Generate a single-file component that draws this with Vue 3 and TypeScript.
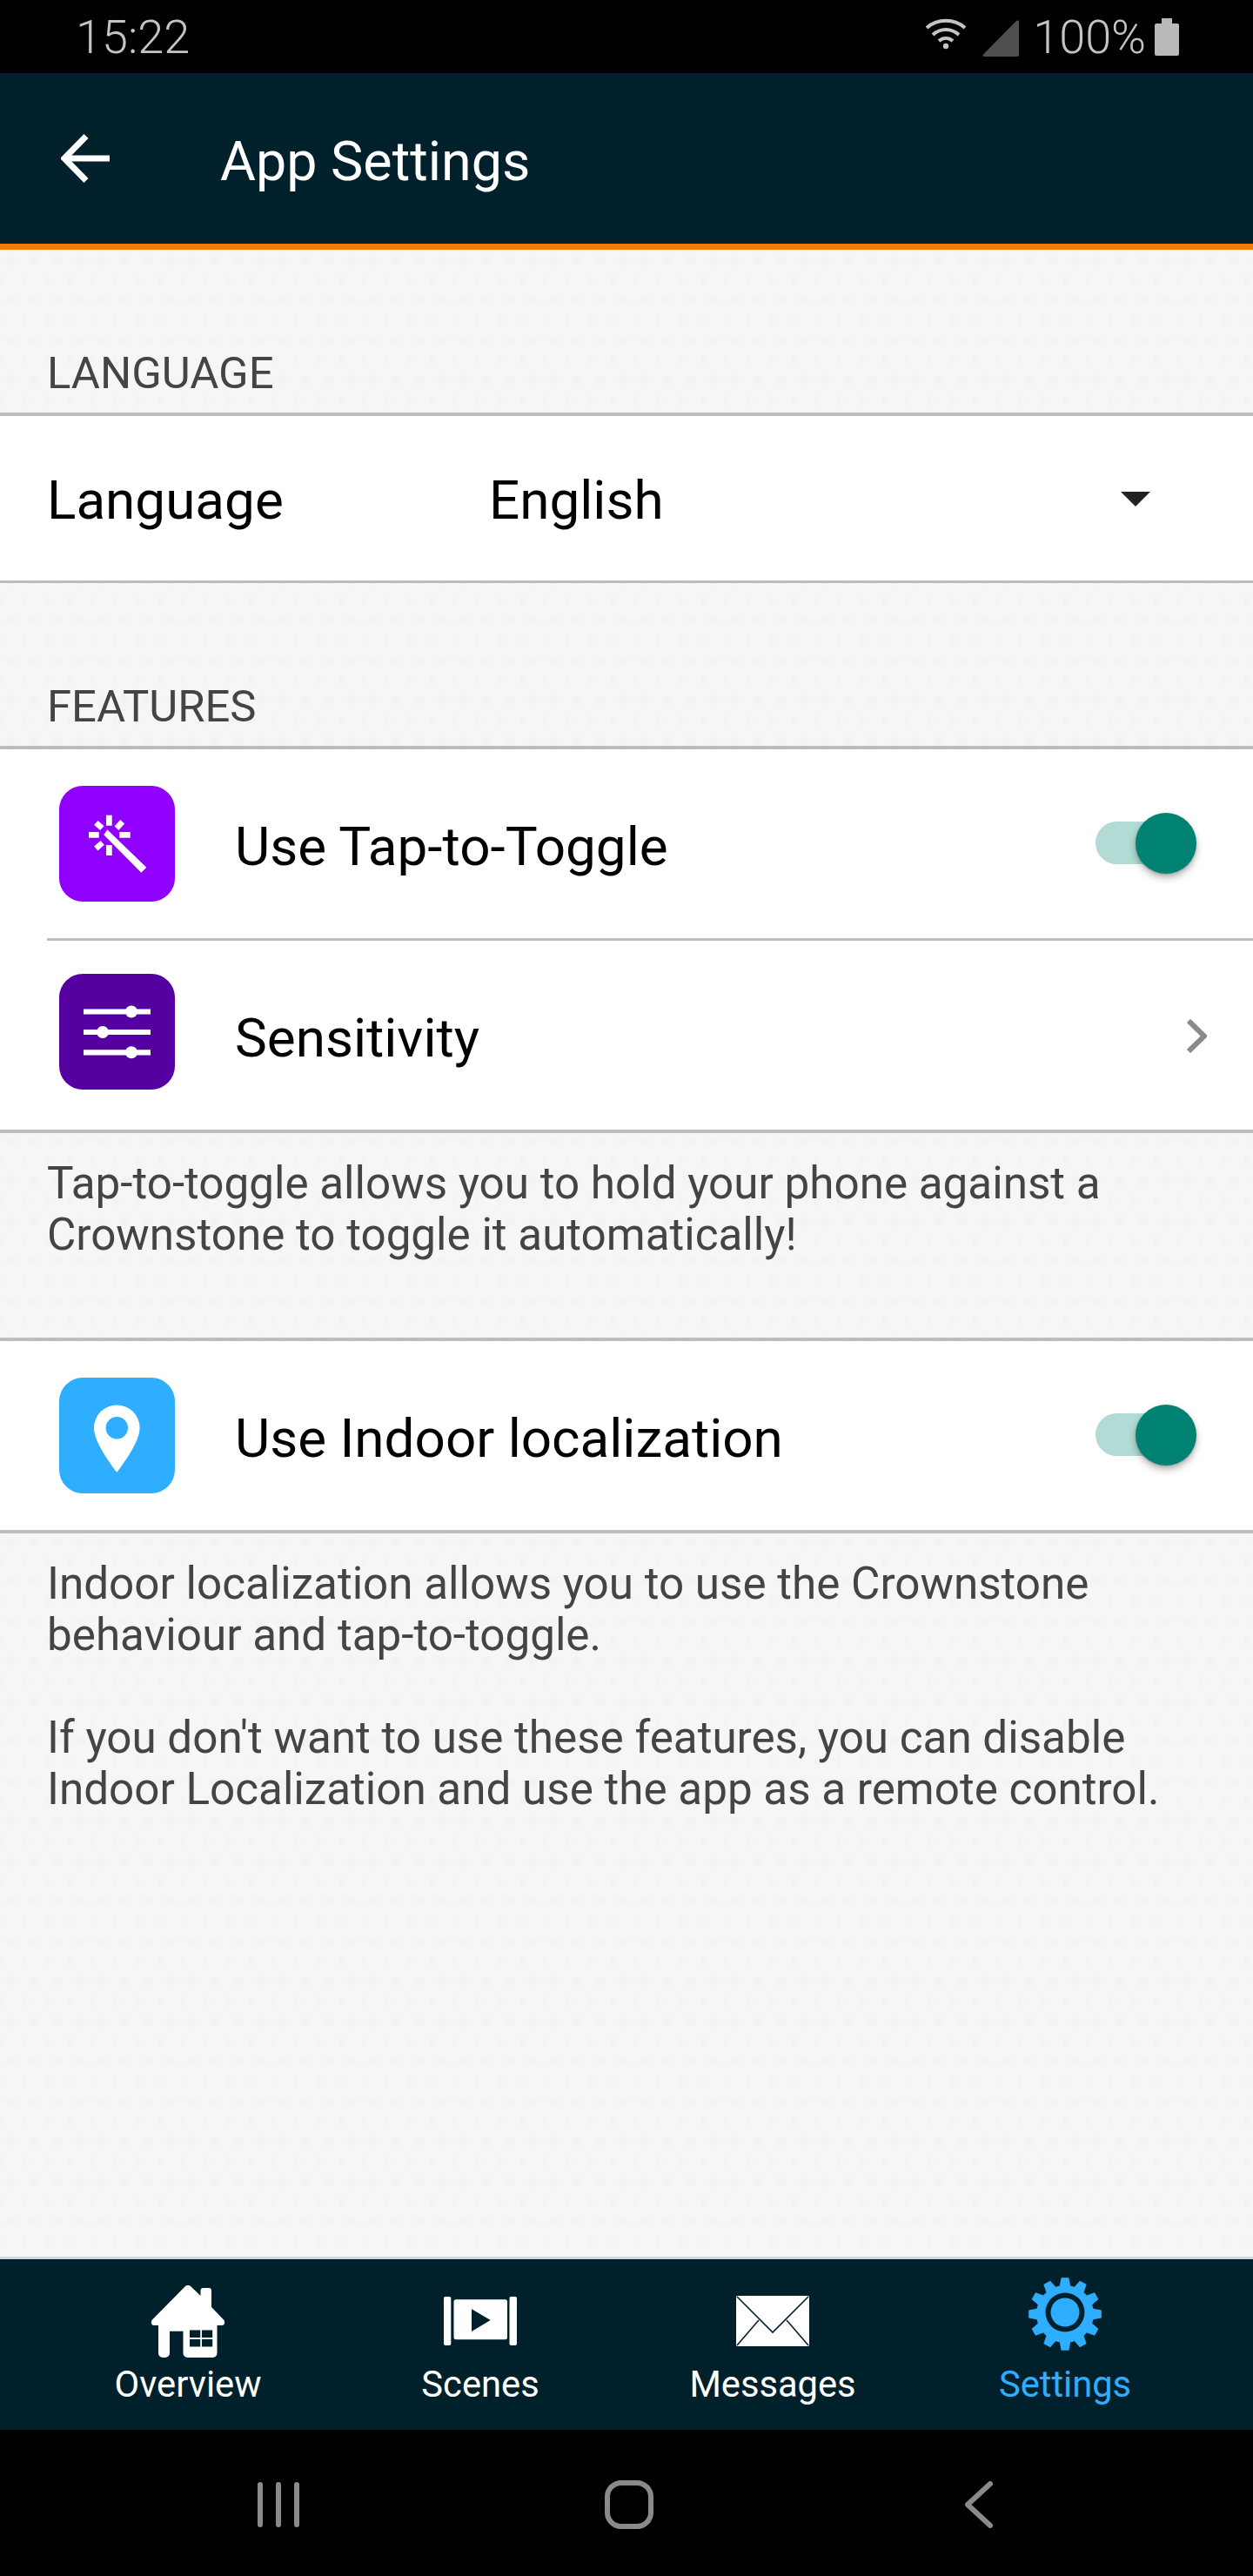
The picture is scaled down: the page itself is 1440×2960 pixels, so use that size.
<script setup lang="ts">
const tabs = [
  { key: 'overview', label: 'Overview' },
  { key: 'scenes', label: 'Scenes' },
  { key: 'messages', label: 'Messages' },
  { key: 'settings', label: 'Settings' },
]

function gearPath(cx: number, cy: number, rOuter: number, rRoot: number, teeth: number): string {
  const pts: string[] = []
  const step = (Math.PI * 2) / teeth
  for (let i = 0; i < teeth; i++) {
    const a = -Math.PI / 2 + i * step
    const offs: [number, number][] = [
      [-0.36, rRoot],
      [-0.2, rOuter],
      [0.2, rOuter],
      [0.36, rRoot],
    ]
    for (const [o, r] of offs) {
      const t = a + o * step
      pts.push(`${(cx + r * Math.cos(t)).toFixed(2)} ${(cy + r * Math.sin(t)).toFixed(2)}`)
    }
  }
  return 'M' + pts.join('L') + 'Z'
}
const gear = gearPath(42, 42, 42, 33, 12)
</script>

<template>
  <div class="phone">
    <header class="status">
      <span class="time">15:22</span>
      <div class="status-right">
        <svg class="wifi" viewBox="0 0 48 36" width="48" height="36" fill="none" stroke="#c4c4c4" stroke-width="4">
          <path d="M2 11C14 0 34 0 46 11" />
          <path d="M9 19C18 11 30 11 39 19" />
          <path d="M16 26C21 22 27 22 32 26" />
          <circle cx="24" cy="32" r="3.2" fill="#c4c4c4" stroke="none" />
        </svg>
        <svg class="signal" viewBox="0 0 42 42" width="42" height="42">
          <path d="M41 0.5a1 1 0 0 1 1 1V40a2 2 0 0 1-2 2H2a1.5 1.5 0 0 1-1-2.600L39 1Z" fill="#4f4f4f" />
        </svg>
        <span class="pct">100%</span>
        <svg class="battery" viewBox="0 0 28 43" width="28" height="43">
          <path d="M8 0h12v6h6a2 2 0 0 1 2 2v33a2 2 0 0 1-2 2H2a2 2 0 0 1-2-2V8a2 2 0 0 1 2-2h6Z" fill="#b9b9b9" />
        </svg>
      </div>
    </header>

    <nav class="topbar">
      <svg class="back" viewBox="0 0 56 56" width="56" height="56" fill="none" stroke="#fff" stroke-width="7">
        <path d="M56 28H4" />
        <path d="M29 2.500L4 28l25 25.500" />
      </svg>
      <span class="title">App Settings</span>
    </nav>

    <main class="content">
      <div class="label">LANGUAGE</div>
      <div class="group lang-group">
        <div class="row lang">
          <span class="lang-name">Language</span>
          <span class="lang-value">English</span>
          <span class="caret"></span>
        </div>
      </div>

      <div class="label">FEATURES</div>
      <div class="group">
        <div class="row icon-row">
          <svg class="app-icon" viewBox="0 0 133 133" width="133" height="133">
            <rect width="133" height="133" rx="27" fill="#8f00ff" />
            <g fill="#fff">
              <path d="M55.300 50.300L100.300 93.700L94.300 99.700L51.300 56.300Z" />
              <rect x="54" y="33.700" width="6.700" height="12" />
              <rect x="54" y="68" width="6.700" height="12" />
              <rect x="34" y="53" width="11.700" height="6.700" />
              <rect x="69.300" y="53" width="12.400" height="6.700" />
            </g>
            <g stroke="#fff" stroke-width="6.500" fill="none">
              <path d="M42.300 42.300L49.300 48.700" />
              <path d="M72.700 41.300L66 48.700" />
              <path d="M42.300 72L49.700 65.300" />
            </g>
          </svg>
          <span class="row-text">Use Tap-to-Toggle</span>
          <span class="toggle"><span class="thumb"></span></span>
        </div>
        <div class="sep"></div>
        <div class="row icon-row">
          <svg class="app-icon raised" viewBox="0 0 133 133" width="133" height="133">
            <rect width="133" height="133" rx="27" fill="#5500a0" />
            <g stroke="#fff" stroke-width="6.200">
              <path d="M28 43.500H105" />
              <path d="M28 67H105" />
              <path d="M28 90.300H105" />
            </g>
            <g fill="#fff">
              <circle cx="83" cy="43.500" r="7" />
              <circle cx="50" cy="67" r="7" />
              <circle cx="83" cy="90.300" r="7" />
            </g>
          </svg>
          <span class="row-text">Sensitivity</span>
          <svg class="chev" viewBox="0 0 23 39" width="23" height="39" fill="none" stroke="#8a8a8a" stroke-width="6">
            <path d="M2 2L20 19.500L2 37" />
          </svg>
        </div>
      </div>
      <p class="desc desc-a">Tap-to-toggle allows you to hold your phone against a<br />Crownstone to toggle it automatically!</p>

      <div class="group">
        <div class="row icon-row">
          <svg class="app-icon" viewBox="0 0 133 133" width="133" height="133">
            <rect width="133" height="133" rx="27" fill="#2fadff" />
            <path fill="#fff" fill-rule="evenodd" d="M66.300 108.700C55 94 40 72 40 57.700a26.300 26.300 0 0 1 52.600 0C92.600 72 77.600 94 66.300 108.700ZM66.300 45a12.700 12.700 0 1 0 0 25.400a12.700 12.700 0 1 0 0-25.400Z" />
          </svg>
          <span class="row-text">Use Indoor localization</span>
          <span class="toggle"><span class="thumb"></span></span>
        </div>
      </div>
      <p class="desc desc-b">Indoor localization allows you to use the Crownstone<br />behaviour and tap-to-toggle.<br /><br />If you don't want to use these features, you can disable<br />Indoor Localization and use the app as a remote control.</p>
    </main>

    <footer class="tabbar">
      <div v-for="t in tabs" :key="t.key" class="tab" :class="{ active: t.key === 'settings' }">
        <div class="tab-icon">
          <svg v-if="t.key === 'overview'" viewBox="0 0 84 83" width="84" height="83">
            <path fill="#fff" d="M38.500 1.500a5 5 0 0 1 7 0L56.500 12V6a3 3 0 0 1 3-3H66a3 3 0 0 1 3 3V25L82.500 39a4 4 0 0 1 1.500 3v1a3 3 0 0 1-3 3H75.500V78a5 5 0 0 1-5 5H41.500a5 5 0 0 1-5-5V52.700H21V78a5 5 0 0 1-5 5H13a5 5 0 0 1-5-5V46H3a3 3 0 0 1-3-3V42a4 4 0 0 1 1.500-3Z" />
            <g fill="#00212c">
              <rect x="44" y="51.500" width="12.200" height="8.500" />
              <rect x="58" y="51.500" width="12.200" height="8.500" />
              <rect x="44" y="62" width="12.200" height="8.500" />
              <rect x="58" y="62" width="12.200" height="8.500" />
            </g>
          </svg>
          <svg v-else-if="t.key === 'scenes'" class="scenes" viewBox="0 0 84 56" width="84" height="56">
            <rect x="0" y="0" width="8.300" height="56" rx="2" fill="#fff" />
            <rect x="75.500" y="0" width="8.500" height="56" rx="2" fill="#fff" />
            <rect x="11.500" y="3.300" width="61.500" height="46" rx="2.500" fill="#fff" />
            <path d="M32 14.300L53.700 27L32 40Z" fill="#00212c" />
          </svg>
          <svg v-else-if="t.key === 'messages'" class="mail" viewBox="0 0 84 58" width="84" height="58">
            <rect width="84" height="58" rx="1.500" fill="#fff" />
            <g fill="none" stroke="#00212c" stroke-width="1.600">
              <path d="M1 1L42 42L83 1" />
              <path d="M1 57L26 28" />
              <path d="M83 57L58 28" />
            </g>
          </svg>
          <svg v-else class="gear" viewBox="0 0 84 84" width="84" height="84">
            <path :d="gear" fill="#2fadff" />
            <circle cx="42" cy="40" r="22.500" fill="#00212c" />
            <circle cx="42" cy="40" r="16.500" fill="#2fadff" />
          </svg>
        </div>
        <span class="tab-label">{{ t.label }}</span>
      </div>
    </footer>

    <div class="sysnav">
      <div class="recents"><span></span><span></span><span></span></div>
      <div class="home-key"></div>
      <svg class="sys-back" viewBox="0 0 32 54" width="32" height="54" fill="none" stroke="#8a8a8a" stroke-width="6" stroke-linecap="round" stroke-linejoin="round">
        <path d="M29 3L3 27L29 51" />
      </svg>
    </div>
  </div>
</template>

<style>
html, body { margin: 0; background: #000; }
</style>

<style scoped>
.phone {
  width: 1440px;
  height: 2960px;
  display: flex;
  flex-direction: column;
  font-family: Roboto, "Liberation Sans", sans-serif;
  overflow: hidden;
}
.status {
  height: 84px;
  flex: none;
  background: #000;
  display: flex;
  align-items: center;
  justify-content: space-between;
  padding: 0 85px 0 87px;
  box-sizing: border-box;
  color: #c4c4c4;
}
.time { font-size: 54px; font-weight: 300; line-height: 84px; padding-top: 2px; }
.status-right { display: flex; align-items: center; }
.wifi { margin-right: 18px; margin-top: -6px; }
.signal { margin-right: 16px; margin-top: 4px; }
.pct { font-size: 54px; font-weight: 300; line-height: 84px; margin-right: 10px; padding-top: 2px; }
.topbar {
  height: 203px;
  flex: none;
  background: #00212c;
  border-bottom: 7px solid #ef7b00;
  box-sizing: border-box;
  display: flex;
  align-items: center;
  color: #fff;
}
.back { margin-left: 70px; }
.title { margin-left: 127px; margin-top: 8px; font-size: 62.800px; line-height: 72px; }
.content {
  flex: 1;
  min-height: 0;
  background-color: #f6f6f6;
  background-image:
    radial-gradient(ellipse 9px 8px at 13px 12px, rgba(0, 0, 0, 0.016), rgba(0, 0, 0, 0) 100%),
    radial-gradient(ellipse 9px 9px at 0 35px, rgba(0, 0, 0, 0.016), rgba(0, 0, 0, 0) 100%);
  background-size: 26px 46px;
}
.label {
  font-size: 50.800px;
  color: #444;
  padding: 112px 0 15px 54px;
  line-height: 60px;
}
.group {
  background: #fff;
  border-top: 4px solid #bdbdbd;
  border-bottom: 4px solid #bdbdbd;
}
.group.lang-group { border-bottom-width: 3px; }
.row { display: flex; align-items: center; }
.lang { height: 189px; padding: 4px 0 0 54px; box-sizing: border-box; position: relative; font-size: 62px; color: #000; }
.lang-name { width: 508px; }
.caret {
  position: absolute;
  left: 1288px;
  top: 87px;
  border-left: 17px solid transparent;
  border-right: 17px solid transparent;
  border-top: 17px solid #222;
}
.icon-row { height: 217px; padding-left: 68px; box-sizing: border-box; position: relative; }
.app-icon { flex: none; }
.app-icon.raised { margin-bottom: 8px; }
.row-text { margin: 5px 0 0 69px; font-size: 62px; color: #000; }
.toggle {
  position: absolute;
  left: 1259px;
  top: 83px;
  width: 92px;
  height: 49px;
  border-radius: 25px;
  background: #b2dbd6;
}
.thumb {
  position: absolute;
  right: -24px;
  top: -10px;
  width: 70px;
  height: 70px;
  border-radius: 50%;
  background: #008272;
  box-shadow: 0 5px 8px rgba(0, 0, 0, 0.28), 0 1px 3px rgba(0, 0, 0, 0.2);
}
.sep { height: 3px; background: #bdbdbd; margin-left: 54px; }
.chev { position: absolute; left: 1364px; top: 90px; }
.desc {
  margin: 0;
  font-size: 51.200px;
  line-height: 59px;
  color: #444;
  padding-left: 54px;
}
.desc-a { padding-top: 28px; padding-bottom: 89px; }
.desc-b { padding-top: 28px; }
.tabbar {
  height: 199px;
  flex: none;
  box-sizing: border-box;
  background: #00212c;
  border-top: 3px solid #c9dde3;
  padding: 0 48px;
  display: flex;
  color: #fff;
}
.tab { width: 336px; display: flex; flex-direction: column; align-items: center; }
.tab.active { color: #2fadff; }
.tab-icon { height: 100px; display: flex; align-items: center; margin-top: 21px; }
.gear { margin-bottom: 16px; }
.tab-label { font-size: 41.700px; line-height: 48px; margin-top: -1px; }
.sysnav {
  height: 168px;
  flex: none;
  background: #000;
  padding-top: 4px;
  box-sizing: border-box;
  display: flex;
  align-items: center;
}
.recents { display: flex; gap: 15px; margin-left: 296px; }
.recents span { width: 6px; height: 52px; border-radius: 3px; background: #8a8a8a; }
.home-key {
  margin-left: 351px;
  width: 56px;
  height: 56px;
  box-sizing: border-box;
  border: 6px solid #8a8a8a;
  border-radius: 19px;
}
.sys-back { margin-left: 358px; }
</style>
